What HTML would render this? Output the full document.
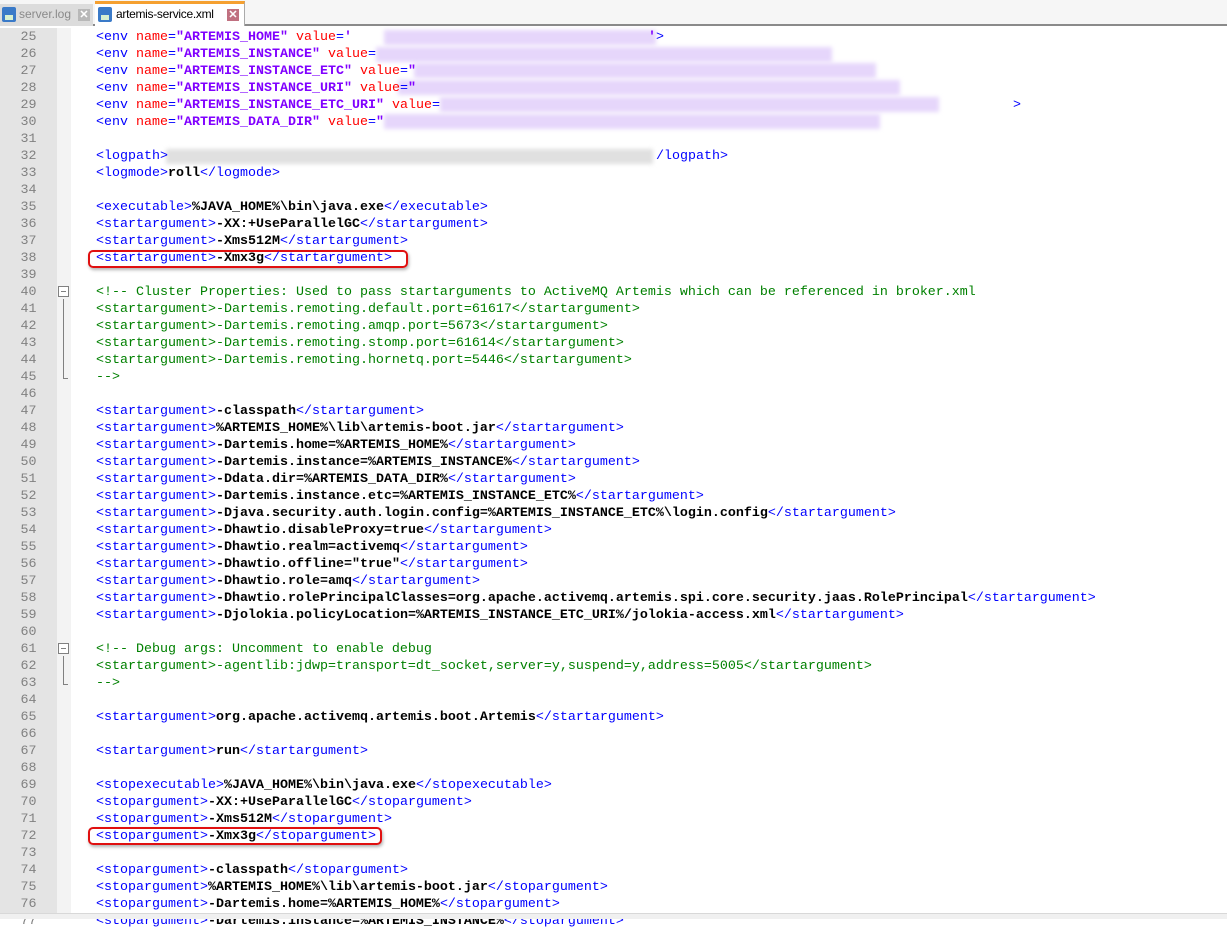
<!DOCTYPE html>
<html><head><meta charset="utf-8"><style>
*{margin:0;padding:0;box-sizing:border-box}
body{width:1227px;height:919px;overflow:hidden;background:#fff;position:relative;font-family:"Liberation Mono",monospace;font-size:13.33px}
#tabs{position:absolute;left:0;top:0;width:1227px;height:26px;background:#f6f6f6;border-bottom:2px solid #8a8a8a}
.tab{position:absolute;top:2px;height:24px;font-family:"Liberation Sans",sans-serif;font-size:12px;line-height:24px}
.t1{left:0;width:93px;background:#dcdcdc;color:#8a8a8a;top:4px;height:22px;line-height:20px}
.t2{left:95px;width:150px;background:#fff;border-top:3px solid #f5a030;top:1px;height:25px;line-height:20px;color:#000;border-right:1px solid #aaa}
.disk{position:absolute;top:3px;width:14px;height:15px;background:#3a7ac8;border-radius:2px}
.disk:after{content:"";position:absolute;left:3px;top:8px;width:8px;height:5px;background:#d8f0d0}
.x{position:absolute;top:5px;width:12px;height:12px;color:#fff;font-size:11px;line-height:12px;text-align:center;font-weight:bold}
#gut{position:absolute;left:0;top:28px;width:57px;height:891px;background:#e4e4e4}
#fold{position:absolute;left:57px;top:28px;width:14px;height:891px;background:#f3f3f3}
.ln{position:absolute;left:0;width:57px;text-align:center;color:#808080;height:17px;line-height:17px}
.l{position:absolute;left:96px;white-space:pre;height:17px;line-height:17px}
.t{color:#0000ff}.a{color:#ff0000}.v{color:#8000ff;font-weight:bold}.b{color:#000;font-weight:bold}.c{color:#008000}
.blur{position:absolute;height:15px;background:#e6d6fb;filter:blur(2px)}
.box{position:absolute;border:2px solid #e01010;border-radius:5px;box-shadow:1px 2px 3px rgba(0,0,0,.3)}
.fb{position:absolute;left:58px;width:11px;height:11px;border:1px solid #808080;background:#fff}
.fb:after{content:"";position:absolute;left:2px;top:4px;width:5px;height:1px;background:#808080}
.fl{position:absolute;left:63px;width:1px;background:#808080}
.ft{position:absolute;left:63px;width:5px;height:1px;background:#808080}
</style></head><body>
<div id="tabs">
<div class="tab t1"><div class="disk" style="left:2px"></div><span style="position:absolute;left:19px">server.log</span><div class="x" style="left:78px;background:#b8b8b8">✕</div></div>
<div class="tab t2"><div class="disk" style="left:3px"></div><span style="position:absolute;left:21px;letter-spacing:-0.3px">artemis-service.xml</span><div class="x" style="left:132px;background:#c07080">✕</div></div>
</div>
<div id="gut"></div><div id="fold"></div>
<div class="fl" style="top:299px;height:80px"></div><div class="ft" style="top:378px"></div>
<div class="fl" style="top:656px;height:29px"></div><div class="ft" style="top:684px"></div>
<div class="fb" style="top:286px"></div><div class="fb" style="top:643px"></div>

<div class="blur" style="left:384px;top:30px;width:272px"></div>
<div class="blur" style="left:376px;top:47px;width:456px"></div>
<div class="blur" style="left:414px;top:63px;width:462px"></div>
<div class="blur" style="left:398px;top:80px;width:502px"></div>
<div class="blur" style="left:440px;top:97px;width:499px"></div>
<div class="blur" style="left:384px;top:114px;width:496px"></div>
<div class="blur" style="left:166px;top:149px;width:487px;background:#e0e0e0"></div>

<div class="box" style="left:88px;top:250px;width:320px;height:18px"></div>
<div class="box" style="left:88px;top:827px;width:294px;height:18px"></div>

<div id="lines">
<div class="ln" style="top:29px">25</div><div class="l" style="top:29px"><span class="t">&lt;env </span><span class="a">name</span><span class="t">=</span><span class="v">"ARTEMIS_HOME"</span> <span class="a">value</span><span class="t">=</span><span class="v">'</span><span style="display:inline-block;width:296px"></span><span class="v">'</span><span class="t">&gt;</span></div>
<div class="ln" style="top:46px">26</div><div class="l" style="top:46px"><span class="t">&lt;env </span><span class="a">name</span><span class="t">=</span><span class="v">"ARTEMIS_INSTANCE"</span> <span class="a">value</span><span class="t">=</span></div>
<div class="ln" style="top:63px">27</div><div class="l" style="top:63px"><span class="t">&lt;env </span><span class="a">name</span><span class="t">=</span><span class="v">"ARTEMIS_INSTANCE_ETC"</span> <span class="a">value</span><span class="t">=</span><span class="v">"</span></div>
<div class="ln" style="top:80px">28</div><div class="l" style="top:80px"><span class="t">&lt;env </span><span class="a">name</span><span class="t">=</span><span class="v">"ARTEMIS_INSTANCE_URI"</span> <span class="a">value</span><span class="t">=</span><span class="v">"</span></div>
<div class="ln" style="top:97px">29</div><div class="l" style="top:97px"><span class="t">&lt;env </span><span class="a">name</span><span class="t">=</span><span class="v">"ARTEMIS_INSTANCE_ETC_URI"</span> <span class="a">value</span><span class="t">=</span><span style="display:inline-block;width:573px"></span><span class="t">&gt;</span></div>
<div class="ln" style="top:114px">30</div><div class="l" style="top:114px"><span class="t">&lt;env </span><span class="a">name</span><span class="t">=</span><span class="v">"ARTEMIS_DATA_DIR"</span> <span class="a">value</span><span class="t">=</span><span class="v">"</span></div>
<div class="ln" style="top:131px">31</div>
<div class="ln" style="top:148px">32</div><div class="l" style="top:148px"><span class="t">&lt;logpath&gt;</span><span style="display:inline-block;width:488px"></span><span class="t">/logpath&gt;</span></div>
<div class="ln" style="top:165px">33</div><div class="l" style="top:165px"><span class="t">&lt;logmode&gt;</span><span class="b">roll</span><span class="t">&lt;/logmode&gt;</span></div>
<div class="ln" style="top:182px">34</div>
<div class="ln" style="top:199px">35</div><div class="l" style="top:199px"><span class="t">&lt;executable&gt;</span><span class="b">%JAVA_HOME%\bin\java.exe</span><span class="t">&lt;/executable&gt;</span></div>
<div class="ln" style="top:216px">36</div><div class="l" style="top:216px"><span class="t">&lt;startargument&gt;</span><span class="b">-XX:+UseParallelGC</span><span class="t">&lt;/startargument&gt;</span></div>
<div class="ln" style="top:233px">37</div><div class="l" style="top:233px"><span class="t">&lt;startargument&gt;</span><span class="b">-Xms512M</span><span class="t">&lt;/startargument&gt;</span></div>
<div class="ln" style="top:250px">38</div><div class="l" style="top:250px"><span class="t">&lt;startargument&gt;</span><span class="b">-Xmx3g</span><span class="t">&lt;/startargument&gt;</span></div>
<div class="ln" style="top:267px">39</div>
<div class="ln" style="top:284px">40</div><div class="l c" style="top:284px">&lt;!-- Cluster Properties: Used to pass startarguments to ActiveMQ Artemis which can be referenced in broker.xml</div>
<div class="ln" style="top:301px">41</div><div class="l c" style="top:301px">&lt;startargument&gt;-Dartemis.remoting.default.port=61617&lt;/startargument&gt;</div>
<div class="ln" style="top:318px">42</div><div class="l c" style="top:318px">&lt;startargument&gt;-Dartemis.remoting.amqp.port=5673&lt;/startargument&gt;</div>
<div class="ln" style="top:335px">43</div><div class="l c" style="top:335px">&lt;startargument&gt;-Dartemis.remoting.stomp.port=61614&lt;/startargument&gt;</div>
<div class="ln" style="top:352px">44</div><div class="l c" style="top:352px">&lt;startargument&gt;-Dartemis.remoting.hornetq.port=5446&lt;/startargument&gt;</div>
<div class="ln" style="top:369px">45</div><div class="l c" style="top:369px">--&gt;</div>
<div class="ln" style="top:386px">46</div>
<div class="ln" style="top:403px">47</div><div class="l" style="top:403px"><span class="t">&lt;startargument&gt;</span><span class="b">-classpath</span><span class="t">&lt;/startargument&gt;</span></div>
<div class="ln" style="top:420px">48</div><div class="l" style="top:420px"><span class="t">&lt;startargument&gt;</span><span class="b">%ARTEMIS_HOME%\lib\artemis-boot.jar</span><span class="t">&lt;/startargument&gt;</span></div>
<div class="ln" style="top:437px">49</div><div class="l" style="top:437px"><span class="t">&lt;startargument&gt;</span><span class="b">-Dartemis.home=%ARTEMIS_HOME%</span><span class="t">&lt;/startargument&gt;</span></div>
<div class="ln" style="top:454px">50</div><div class="l" style="top:454px"><span class="t">&lt;startargument&gt;</span><span class="b">-Dartemis.instance=%ARTEMIS_INSTANCE%</span><span class="t">&lt;/startargument&gt;</span></div>
<div class="ln" style="top:471px">51</div><div class="l" style="top:471px"><span class="t">&lt;startargument&gt;</span><span class="b">-Ddata.dir=%ARTEMIS_DATA_DIR%</span><span class="t">&lt;/startargument&gt;</span></div>
<div class="ln" style="top:488px">52</div><div class="l" style="top:488px"><span class="t">&lt;startargument&gt;</span><span class="b">-Dartemis.instance.etc=%ARTEMIS_INSTANCE_ETC%</span><span class="t">&lt;/startargument&gt;</span></div>
<div class="ln" style="top:505px">53</div><div class="l" style="top:505px"><span class="t">&lt;startargument&gt;</span><span class="b">-Djava.security.auth.login.config=%ARTEMIS_INSTANCE_ETC%\login.config</span><span class="t">&lt;/startargument&gt;</span></div>
<div class="ln" style="top:522px">54</div><div class="l" style="top:522px"><span class="t">&lt;startargument&gt;</span><span class="b">-Dhawtio.disableProxy=true</span><span class="t">&lt;/startargument&gt;</span></div>
<div class="ln" style="top:539px">55</div><div class="l" style="top:539px"><span class="t">&lt;startargument&gt;</span><span class="b">-Dhawtio.realm=activemq</span><span class="t">&lt;/startargument&gt;</span></div>
<div class="ln" style="top:556px">56</div><div class="l" style="top:556px"><span class="t">&lt;startargument&gt;</span><span class="b">-Dhawtio.offline="true"</span><span class="t">&lt;/startargument&gt;</span></div>
<div class="ln" style="top:573px">57</div><div class="l" style="top:573px"><span class="t">&lt;startargument&gt;</span><span class="b">-Dhawtio.role=amq</span><span class="t">&lt;/startargument&gt;</span></div>
<div class="ln" style="top:590px">58</div><div class="l" style="top:590px"><span class="t">&lt;startargument&gt;</span><span class="b">-Dhawtio.rolePrincipalClasses=org.apache.activemq.artemis.spi.core.security.jaas.RolePrincipal</span><span class="t">&lt;/startargument&gt;</span></div>
<div class="ln" style="top:607px">59</div><div class="l" style="top:607px"><span class="t">&lt;startargument&gt;</span><span class="b">-Djolokia.policyLocation=%ARTEMIS_INSTANCE_ETC_URI%/jolokia-access.xml</span><span class="t">&lt;/startargument&gt;</span></div>
<div class="ln" style="top:624px">60</div>
<div class="ln" style="top:641px">61</div><div class="l c" style="top:641px">&lt;!-- Debug args: Uncomment to enable debug</div>
<div class="ln" style="top:658px">62</div><div class="l c" style="top:658px">&lt;startargument&gt;-agentlib:jdwp=transport=dt_socket,server=y,suspend=y,address=5005&lt;/startargument&gt;</div>
<div class="ln" style="top:675px">63</div><div class="l c" style="top:675px">--&gt;</div>
<div class="ln" style="top:692px">64</div>
<div class="ln" style="top:709px">65</div><div class="l" style="top:709px"><span class="t">&lt;startargument&gt;</span><span class="b">org.apache.activemq.artemis.boot.Artemis</span><span class="t">&lt;/startargument&gt;</span></div>
<div class="ln" style="top:726px">66</div>
<div class="ln" style="top:743px">67</div><div class="l" style="top:743px"><span class="t">&lt;startargument&gt;</span><span class="b">run</span><span class="t">&lt;/startargument&gt;</span></div>
<div class="ln" style="top:760px">68</div>
<div class="ln" style="top:777px">69</div><div class="l" style="top:777px"><span class="t">&lt;stopexecutable&gt;</span><span class="b">%JAVA_HOME%\bin\java.exe</span><span class="t">&lt;/stopexecutable&gt;</span></div>
<div class="ln" style="top:794px">70</div><div class="l" style="top:794px"><span class="t">&lt;stopargument&gt;</span><span class="b">-XX:+UseParallelGC</span><span class="t">&lt;/stopargument&gt;</span></div>
<div class="ln" style="top:811px">71</div><div class="l" style="top:811px"><span class="t">&lt;stopargument&gt;</span><span class="b">-Xms512M</span><span class="t">&lt;/stopargument&gt;</span></div>
<div class="ln" style="top:828px">72</div><div class="l" style="top:828px"><span class="t">&lt;stopargument&gt;</span><span class="b">-Xmx3g</span><span class="t">&lt;/stopargument&gt;</span></div>
<div class="ln" style="top:845px">73</div>
<div class="ln" style="top:862px">74</div><div class="l" style="top:862px"><span class="t">&lt;stopargument&gt;</span><span class="b">-classpath</span><span class="t">&lt;/stopargument&gt;</span></div>
<div class="ln" style="top:879px">75</div><div class="l" style="top:879px"><span class="t">&lt;stopargument&gt;</span><span class="b">%ARTEMIS_HOME%\lib\artemis-boot.jar</span><span class="t">&lt;/stopargument&gt;</span></div>
<div class="ln" style="top:896px">76</div><div class="l" style="top:896px"><span class="t">&lt;stopargument&gt;</span><span class="b">-Dartemis.home=%ARTEMIS_HOME%</span><span class="t">&lt;/stopargument&gt;</span></div>
<div class="ln" style="top:913px">77</div><div class="l" style="top:913px"><span class="t">&lt;stopargument&gt;</span><span class="b">-Dartemis.instance=%ARTEMIS_INSTANCE%</span><span class="t">&lt;/stopargument&gt;</span></div>
</div>
<div style="position:absolute;left:0;top:913px;width:1227px;height:6px;background:#f0f0f0;border-top:1px solid #d8d8d8"></div>
</body></html>
